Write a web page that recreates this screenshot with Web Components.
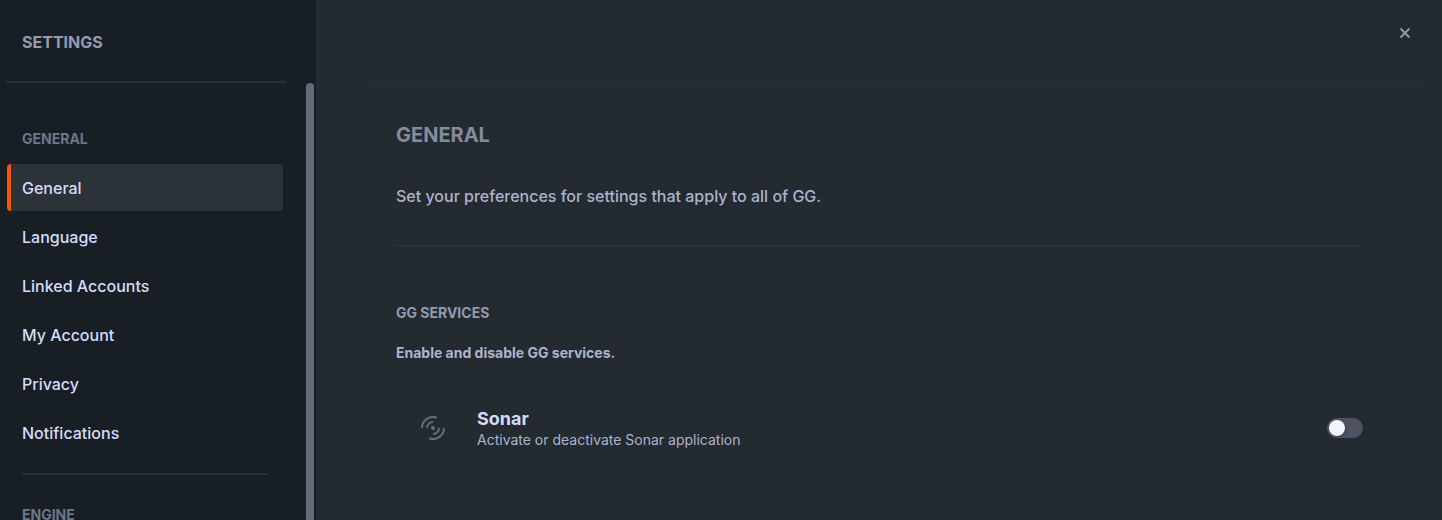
<!DOCTYPE html>
<html lang="en">
<head>
<meta charset="utf-8">
<meta name="viewport" content="width=device-width, initial-scale=1">
<title>Settings</title>
<style>
  body {
    margin: 0;
    background: #232a30;
    font-family: Inter, "Liberation Sans", sans-serif;
    --page: #232a30;
    --sidebar: #181f24;
    --selected: #2b3238;
    --line: #282f37;
    --accent: #ff5200;
    --text: #d5dcfb;
    --text-soft: #abb3d0;
    --label: #939bb0;
    --muted: #6d768a;
  }
</style>
</head>
<body>
<settings-app>
  <settings-sidebar slot="sidebar" heading="Settings">
    <nav-group label="General">
      <nav-item selected>General</nav-item>
      <nav-item>Language</nav-item>
      <nav-item>Linked Accounts</nav-item>
      <nav-item>My Account</nav-item>
      <nav-item>Privacy</nav-item>
      <nav-item>Notifications</nav-item>
    </nav-group>
    <nav-group label="Engine"></nav-group>
  </settings-sidebar>
  <settings-page heading="General">
    <span slot="intro">Set your preferences for settings that apply to all of GG.</span>
    <settings-section heading="GG Services">
      <span slot="summary">Enable and disable GG services.</span>
      <service-row name="Sonar">
        <sonar-icon slot="icon"></sonar-icon>
        Activate or deactivate Sonar application
      </service-row>
    </settings-section>
  </settings-page>
</settings-app>

<script>
  const define = (name, render) => customElements.define(name, class extends HTMLElement {
    constructor() {
      super();
      this.attachShadow({ mode: "open" }).innerHTML = render(this);
    }
  });

  define("settings-app", () => `
    <style>
      :host { display: grid; grid-template-columns: 316px minmax(0, 1fr); height: 100vh; overflow: hidden; }
      main { min-width: 0; overflow: auto; background: var(--page); }
    </style>
    <slot name="sidebar"></slot>
    <main><slot></slot></main>`);

  define("settings-sidebar", el => `
    <style>
      :host { display: flex; flex-direction: column; min-height: 0; background: var(--sidebar); }
      header { margin: 0 30px 0 6px; padding: 32px 16px 29px; border-bottom: 2px solid var(--line); }
      h1 { margin: 0; font-size: 16px; line-height: 20px; font-weight: 700; color: var(--label); text-transform: uppercase; }
      .body { flex: 1; min-height: 0; display: flex; padding-right: 2px; }
      nav { flex: 1; overflow: auto; scrollbar-width: none; padding: 46px 23px 0 7px; background: var(--sidebar); }
      .thumb { width: 8px; border-radius: 4px 4px 0 0; background: #656a7b; }
    </style>
    <header><h1>${el.getAttribute("heading")}</h1></header>
    <div class="body">
      <nav aria-label="Settings"><slot></slot></nav>
      <div class="thumb"></div>
    </div>`);

  define("nav-group", el => `
    <style>
      :host { display: block; }
      :host(:not(:first-child)) { margin: 17px 15px 0; padding-top: 30px; border-top: 2px solid var(--line); }
      h2 { margin: 0 0 15px 15px; font-size: 14px; line-height: 20px; font-weight: 700; color: var(--muted); text-transform: uppercase; }
      :host(:not(:first-child)) h2 { margin-left: 0; }
      .items { display: grid; gap: 2px; }
    </style>
    <h2>${el.getAttribute("label")}</h2>
    <div class="items"><slot></slot></div>`);

  define("nav-item", el => `
    <style>
      :host { display: block; }
      a { display: block; box-sizing: border-box; padding: 12px 11px 11px; border-left: 4px solid transparent; border-radius: 4px;
          font-size: 16px; line-height: 24px; font-weight: 500; color: var(--text); text-decoration: none; }
      :host([selected]) a { background: var(--selected); border-left-color: var(--accent); }
    </style>
    <a href="#" ${el.hasAttribute("selected") ? 'aria-current="page"' : ""}><slot></slot></a>`);

  define("settings-page", el => `
    <style>
      :host { display: block; }
      header { display: flex; justify-content: flex-end; margin: 0 18px 0 52px; padding: 14px 0 30px; border-bottom: 2px solid #272e35; }
      button { display: grid; place-items: center; width: 38px; height: 38px; padding: 0; border: 0; border-radius: 4px; background: #22292f; }
      svg { display: block; }
      article { padding: 39px 79px 40px 80px; }
      h2 { margin: 0; font-size: 20px; line-height: 24px; font-weight: 700; color: #838b9e; text-transform: uppercase; }
      .intro { margin: 0 0 57px; padding: 37px 0; font-size: 16px; line-height: 24px; font-weight: 500; color: var(--text-soft); border-bottom: 1px solid #303844; }
    </style>
    <header>
      <button type="button" aria-label="Close">
        <svg width="12" height="12" viewBox="0 0 12 12" fill="none" stroke="#8e95ab" stroke-width="2"><path d="M1.500 1.500 10.500 10.500M10.500 1.500 1.500 10.500"/></svg>
      </button>
    </header>
    <article>
      <h2>${el.getAttribute("heading")}</h2>
      <p class="intro"><slot name="intro"></slot></p>
      <slot></slot>
    </article>`);

  define("settings-section", el => `
    <style>
      :host { display: block; }
      h3 { margin: 0; font-size: 14px; line-height: 20px; font-weight: 700; color: var(--label); text-transform: uppercase; }
      p { margin: 20px 0 44px; font-size: 14px; line-height: 20px; font-weight: 700; color: var(--text-soft); }
    </style>
    <h3>${el.getAttribute("heading")}</h3>
    <p><slot name="summary"></slot></p>
    <slot></slot>`);

  define("service-row", el => `
    <style>
      :host { display: flex; align-items: center; padding-left: 25px; }
      .text { flex: 1; margin-left: 32px; }
      label { display: block; font-size: 18px; line-height: 24px; font-weight: 700; color: var(--text); }
      .about { font-size: 14px; line-height: 18px; color: var(--text-soft); }
      input { appearance: none; display: flex; align-items: center; box-sizing: border-box; width: 36px; height: 20px; margin: 0; padding: 2px;
              border-radius: 10px; background: #4d5262; }
      input::before { content: ""; width: 16px; height: 16px; border-radius: 50%; background: #f2f3fb; box-shadow: 1px 1px 2px #3a3e4b; }
      input:checked { justify-content: flex-end; background: var(--accent); }
    </style>
    <slot name="icon"></slot>
    <div class="text">
      <label for="toggle">${el.getAttribute("name")}</label>
      <div class="about" id="about"><slot></slot></div>
    </div>
    <input id="toggle" type="checkbox" role="switch" aria-describedby="about">`);

  define("sonar-icon", () => `
    <style>:host, svg { display: block; }</style>
    <svg width="24" height="24" viewBox="0 0 24 24" fill="none" stroke="#646a7b" stroke-width="2" aria-hidden="true">
      <path d="M1 12A11 11 0 0 1 16 1.700M23 12A11 11 0 0 1 8 22.300"/>
      <path d="M6 12A6 6 0 0 1 12 6M18 12A6 6 0 0 1 12 18"/>
      <circle cx="12" cy="12" r="2" fill="#646a7b" stroke="none"/>
    </svg>`);
</script>
</body>
</html>
